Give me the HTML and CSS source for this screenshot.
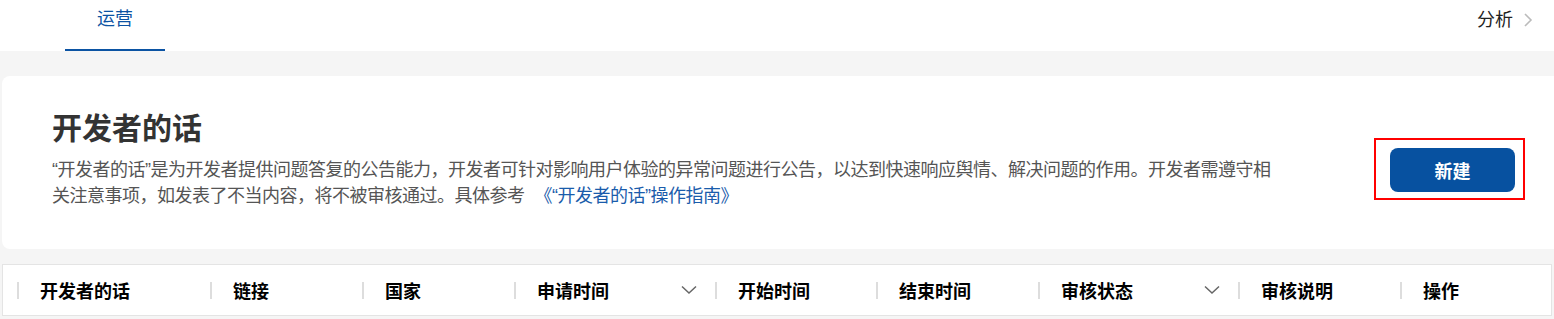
FILE: index.html
```html
<!DOCTYPE html>
<html lang="zh-CN">
<head>
  <meta charset="utf-8">
  <title>开发者的话</title>
  <link rel="stylesheet" href="styles.css">
</head>
<body>

  <div class="topbar">
    <div class="tab active">运营</div>
    <div class="nav-right">
      <span>分析</span>
      <svg class="nav-arrow" width="10" height="16" viewBox="0 0 10 16"><path d="M2 2 L8 8 L2 14" fill="none" stroke="#bbb" stroke-width="1.6"/></svg>
    </div>
  </div>

  <div class="main">
    <div class="card">
      <div class="intro">
        <h1>开发者的话</h1>
        <p>“开发者的话”是为开发者提供问题答复的公告能力，开发者可针对影响用户体验的异常问题进行公告，以达到快速响应舆情、解决问题的作用。开发者需遵守相关注意事项，如发表了不当内容，将不被审核通过。具体参考<a href="#">《“开发者的话”操作指南》</a></p>
      </div>
      <div class="create-wrap">
        <button class="btn-create">新建</button>
      </div>
    </div>

    <div class="table-head">
      <div class="th">开发者的话</div>
      <div class="th">链接</div>
      <div class="th">国家</div>
      <div class="th">申请时间
        <svg class="sort" width="16" height="10" viewBox="0 0 16 10"><path d="M1 1.5 L8 8 L15 1.5" fill="none" stroke="#666" stroke-width="1.5"/></svg>
      </div>
      <div class="th">开始时间</div>
      <div class="th">结束时间</div>
      <div class="th">审核状态
        <svg class="sort" width="16" height="10" viewBox="0 0 16 10"><path d="M1 1.5 L8 8 L15 1.5" fill="none" stroke="#666" stroke-width="1.5"/></svg>
      </div>
      <div class="th">审核说明</div>
      <div class="th">操作</div>
    </div>
  </div>

</body>
</html>
```

FILE: styles.css
```css
body {
  margin: 0;
  padding: 0;
  background-color: #f5f5f5;
  font-family: "Liberation Sans", "Noto Sans CJK SC", sans-serif;
  overflow: hidden;
}

.topbar {
  height: 51px;
  background-color: white;
  display: flex;
  justify-content: space-between;
}

.tab {
  width: 100px;
  height: 49px;
  margin-left: 65px;
  padding-top: 6px;
  box-sizing: border-box;
  text-align: center;
  font-size: 18px;
  line-height: 26px;
  color: #0b53a3;
}

.tab.active {
  height: 51px;
  border-bottom: 2px solid #0b53a3;
}

.nav-right {
  display: flex;
  align-items: flex-start;
  padding-top: 7px;
  margin-right: 21px;
  font-size: 18px;
  line-height: 26px;
  color: #222;
}

.nav-arrow {
  margin-left: 10px;
  margin-top: 5px;
}

.card {
  display: flex;
  align-items: flex-start;
  margin: 25px -10px 0 2px;
  padding: 33px 0 40px 50px;
  background-color: white;
  border-radius: 8px;
}

.intro {
  width: 1230px;
}

.intro h1 {
  margin: 0;
  font-size: 30px;
  line-height: 40px;
  font-weight: bold;
  color: #333;
}

.intro p {
  margin: 8px 0 0;
  font-size: 18px;
  line-height: 26px;
  letter-spacing: -0.5px;
  color: #555;
}

.intro a {
  margin-left: 10px;
  color: #1a5cab;
  text-decoration: none;
}

.create-wrap {
  margin: 29px 0 0 92px;
  padding: 8px 8px 6px 14px;
  border: 2px solid #f00;
}

.btn-create {
  display: block;
  width: 125px;
  height: 44px;
  border: none;
  border-radius: 8px;
  background-color: #0751a0;
  color: white;
  font-family: inherit;
  font-size: 18px;
  font-weight: bold;
  cursor: pointer;
}

.table-head {
  display: grid;
  grid-template-columns: 193px 152px 152px 201px 161px 162px 200px 162px 1fr;
  width: 1550px;
  height: 52px;
  margin: 15px 0 0 2px;
  padding-left: 14px;
  box-sizing: border-box;
  background-color: white;
  border: 1px solid #e4e4e4;
}

.th {
  display: flex;
  align-items: center;
  font-size: 18px;
  font-weight: bold;
  color: #000;
}

.th::before {
  content: "";
  width: 2px;
  height: 17px;
  margin-right: 21px;
  background-color: #ddd;
}

.sort {
  margin-left: auto;
  margin-right: 18px;
}
```
